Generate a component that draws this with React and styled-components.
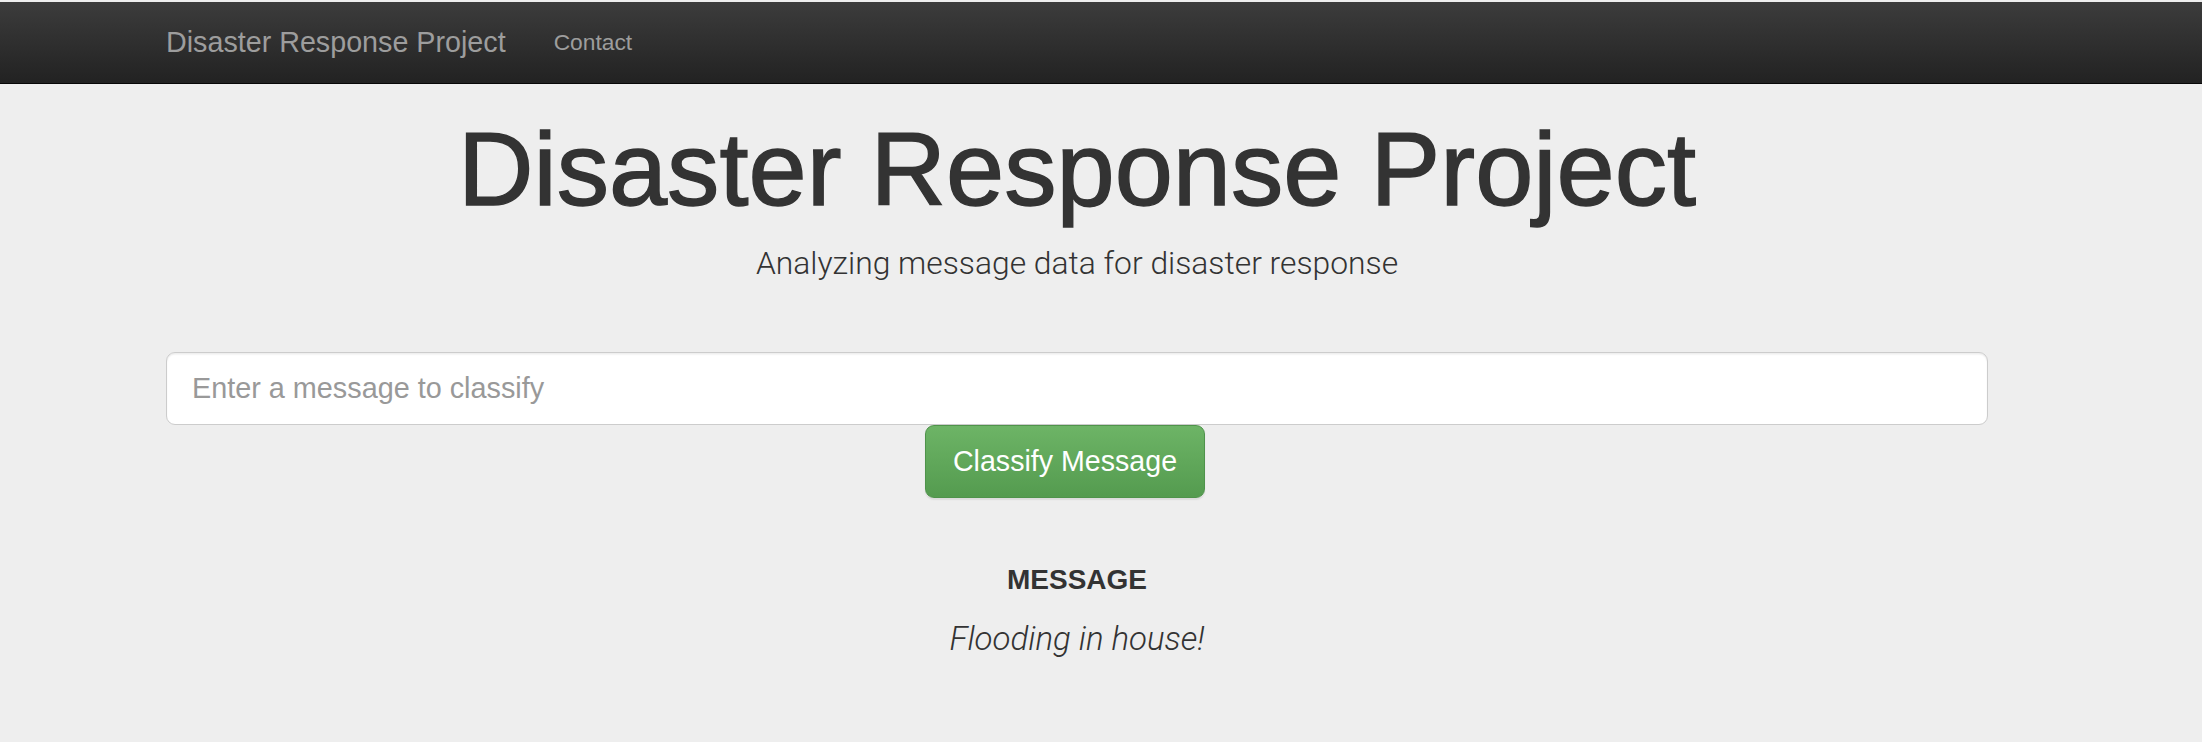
import React from 'react';
import styled, { createGlobalStyle } from 'styled-components';

const GlobalStyle = createGlobalStyle`
  html, body {
    margin: 0;
    padding: 0;
    background: #eeeeee;
    font-family: "Liberation Sans", Arial, sans-serif;
    color: #333333;
  }
`;

export default () => {
  return (
    <Page>
      <GlobalStyle />
      <Navbar>
        <NavInner>
          <Brand href="#">Disaster Response Project</Brand>
          <NavLink href="#">Contact</NavLink>
        </NavInner>
      </Navbar>
      <Container>
        <Title>Disaster Response Project</Title>
        <Lead>Analyzing message data for disaster response</Lead>
        <Form onSubmit={e => e.preventDefault()}>
          <Input type="text" placeholder="Enter a message to classify" />
          <ButtonRow>
            <ClassifyButton type="submit">Classify Message</ClassifyButton>
          </ButtonRow>
        </Form>
        <Result>
          <ResultLabel>MESSAGE</ResultLabel>
          <ResultText>Flooding in house!</ResultText>
        </Result>
      </Container>
    </Page>
  );
};

const Page = styled.div`
  padding-top: 2px;
  min-height: 740px;
`;

const Navbar = styled.nav`
  height: 81px;
  background: linear-gradient(to bottom, #3c3c3c 0%, #222222 100%);
  border-bottom: 1px solid #080808;
`;

const NavInner = styled.div`
  display: flex;
  align-items: center;
  height: 100%;
  padding-left: 166px;
`;

const Brand = styled.a`
  font-size: 28.7px;
  color: #9d9d9d;
  text-decoration: none;
  margin-right: 48px;
`;

const NavLink = styled.a`
  font-size: 22.8px;
  color: #9d9d9d;
  text-decoration: none;
`;

const Container = styled.main`
  width: 1822px;
  margin-left: 166px;
  display: flex;
  flex-direction: column;
  align-items: center;
`;

const Title = styled.h1`
  margin: 33px 0 0;
  font-size: 104.6px;
  line-height: 1;
  font-weight: 400;
  color: #333333;
  -webkit-text-stroke: 1.4px #333333;
`;

const Lead = styled.p`
  margin: 22px 0 0;
  font-family: Roboto, "Liberation Sans", sans-serif;
  font-weight: 300;
  font-size: 31.8px;
  line-height: 1.25;
  color: #333333;
`;

const Form = styled.form`
  width: 100%;
  margin-top: 69px;
`;

const Input = styled.input`
  display: block;
  box-sizing: border-box;
  width: 100%;
  height: 73px;
  padding: 0 25px;
  font-family: "Liberation Sans", Arial, sans-serif;
  font-size: 28.8px;
  color: #555555;
  background: #ffffff;
  border: 1.5px solid #cccccc;
  border-radius: 9px;
  box-shadow: inset 0 1.5px 1.5px rgba(0, 0, 0, 0.075);
  outline: none;

  &::placeholder {
    color: #999999;
  }
`;

const ButtonRow = styled.div`
  display: flex;
  justify-content: center;
  padding-right: 24px;
`;

const ClassifyButton = styled.button`
  box-sizing: border-box;
  height: 73px;
  padding: 0 27px;
  font-family: "Liberation Sans", Arial, sans-serif;
  font-size: 28.6px;
  color: #ffffff;
  background: linear-gradient(to bottom, #6db466 0%, #549b4f 100%);
  border: 1.5px solid #4f934b;
  border-radius: 9px;
  box-shadow: 0 1.5px 1.5px rgba(0, 0, 0, 0.08);
  cursor: pointer;
`;

const Result = styled.section`
  display: flex;
  flex-direction: column;
  align-items: center;
  margin-top: 65px;
`;

const ResultLabel = styled.h3`
  margin: 0;
  font-size: 28px;
  line-height: 1.2;
  font-weight: 700;
  color: #333333;
`;

const ResultText = styled.p`
  margin: 22px 0 0;
  font-family: Roboto, "Liberation Sans", sans-serif;
  font-weight: 300;
  font-style: italic;
  font-size: 33px;
  line-height: 1.2;
  color: #333333;
`;
